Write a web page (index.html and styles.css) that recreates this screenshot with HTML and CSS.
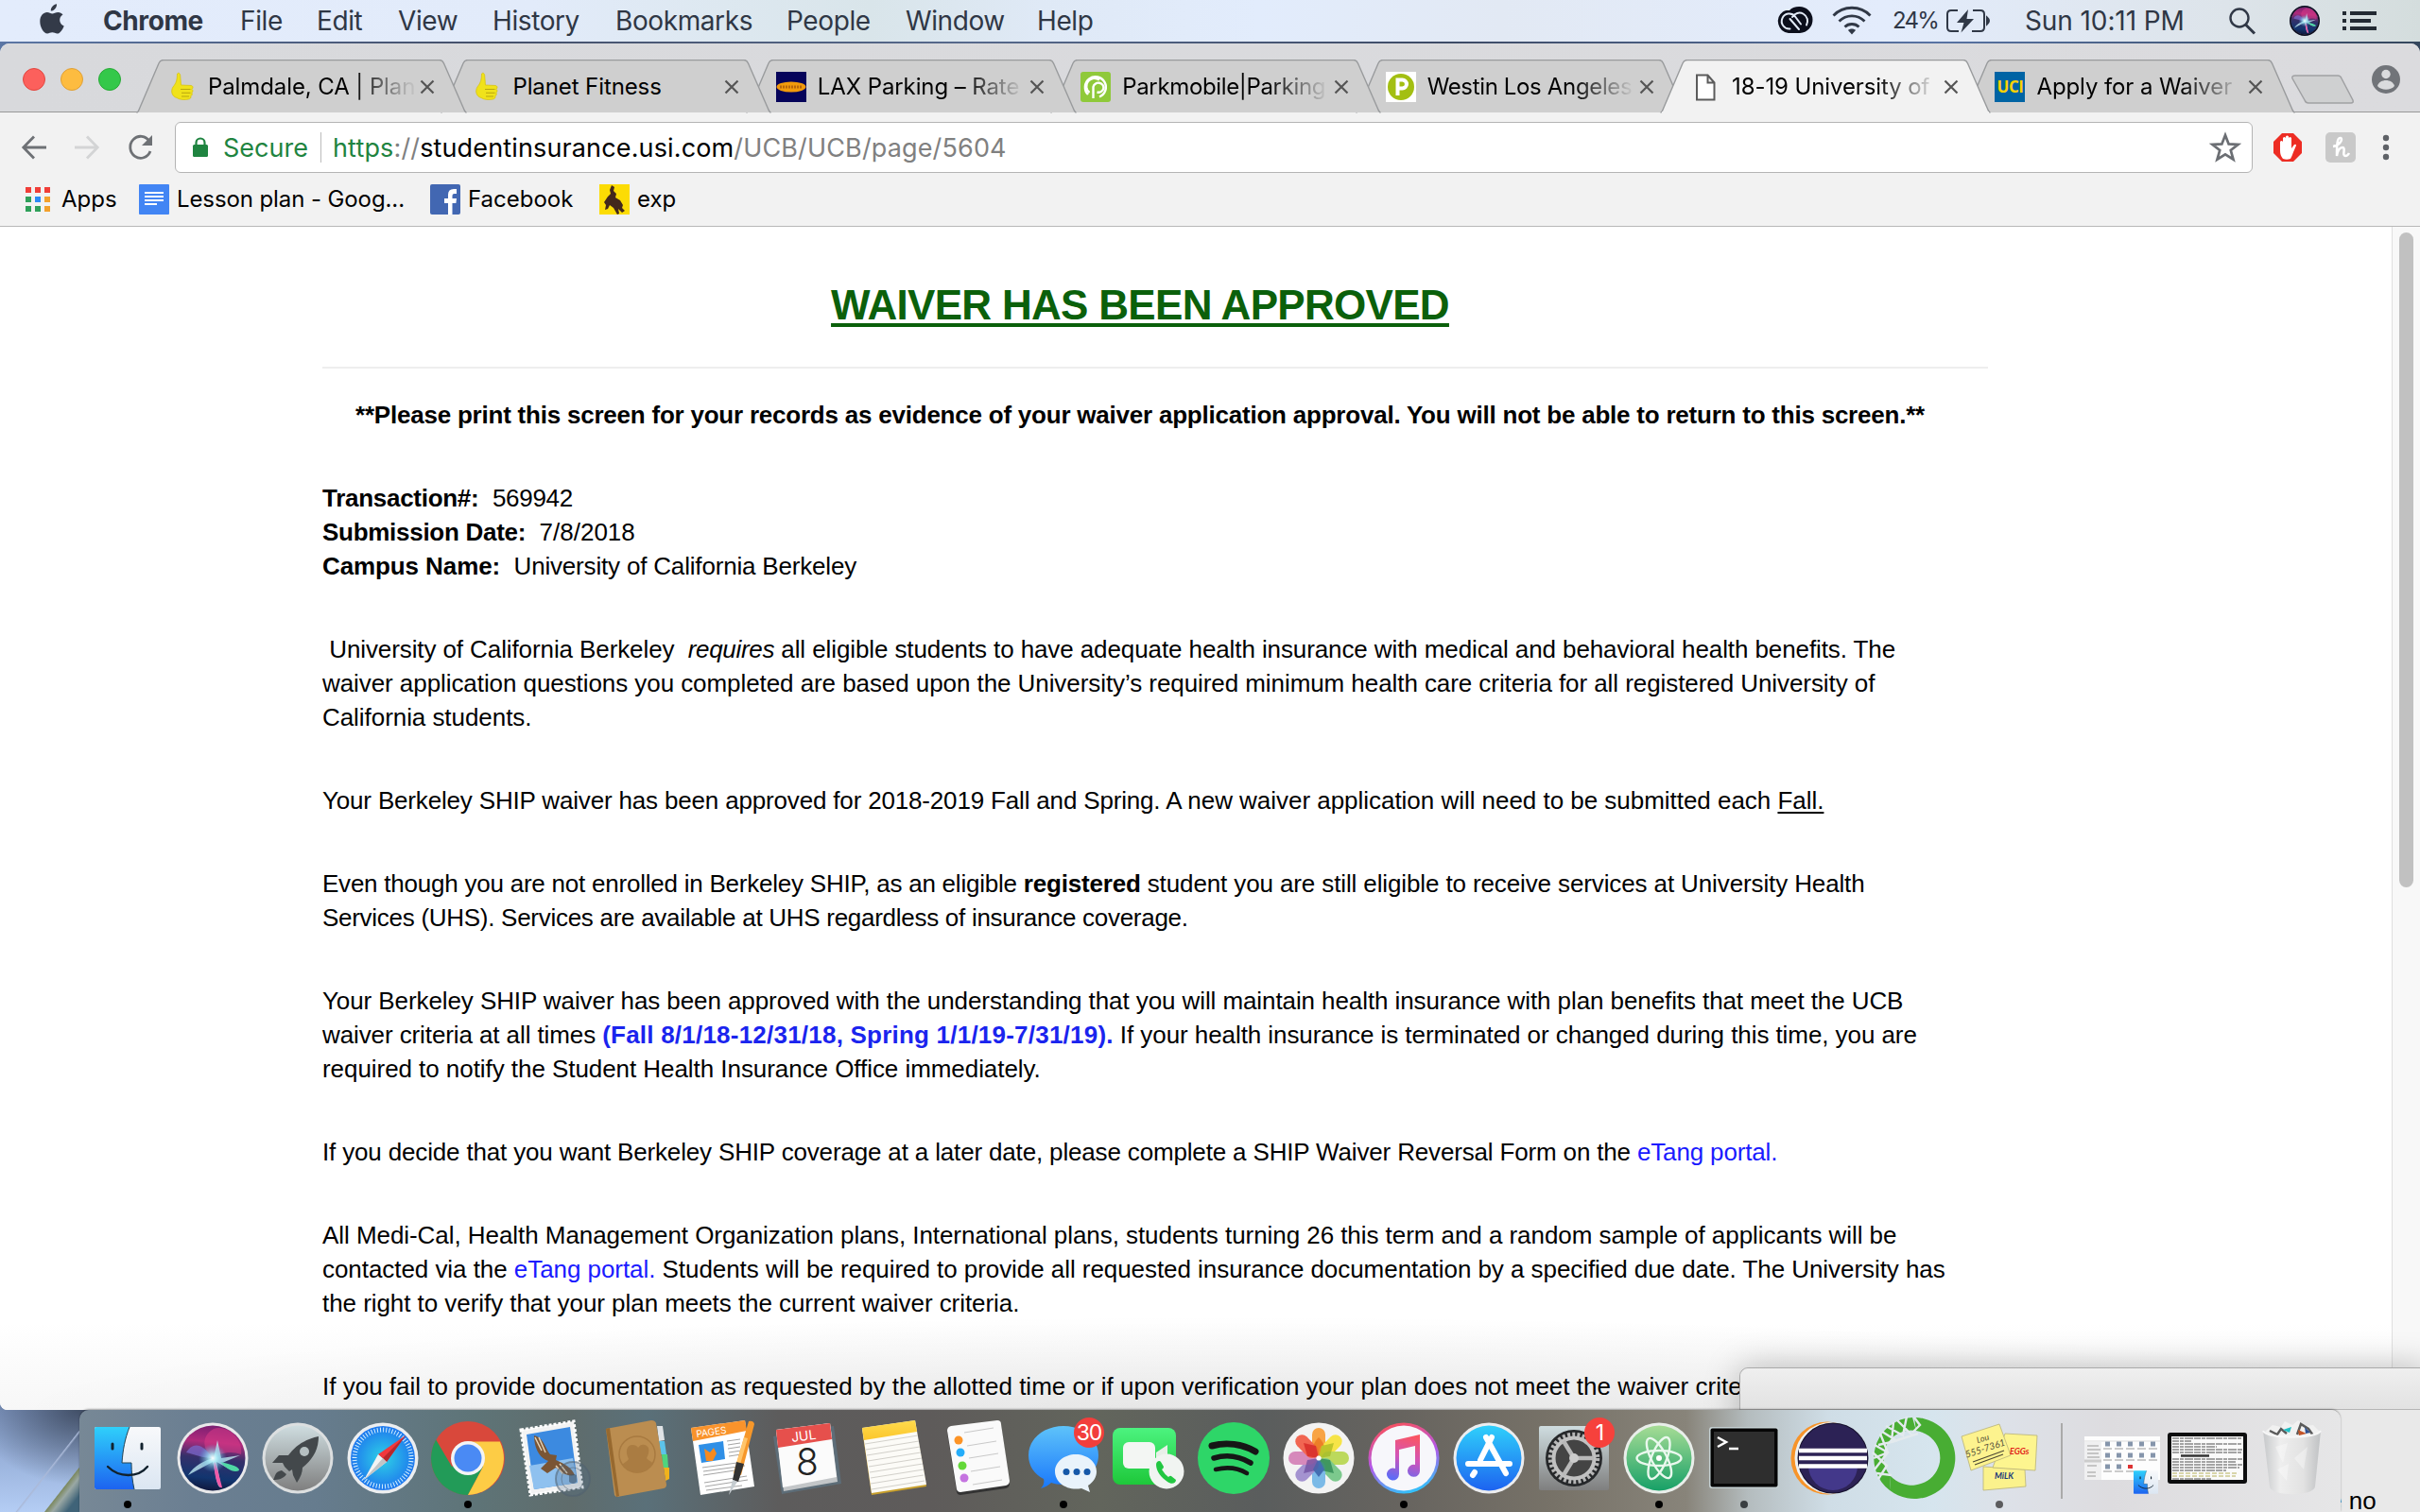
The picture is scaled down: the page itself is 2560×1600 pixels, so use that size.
FILE: index.html
```html
<!DOCTYPE html>
<html lang="en">
<head>
<meta charset="utf-8">
<title>18-19 University of California Berkeley</title>
<link rel="stylesheet" href="styles.css">
</head>
<body>
<svg class="defs" width="0" height="0">
  <defs>
    <linearGradient id="sky" x1="0" y1="0" x2="0" y2="1"><stop offset="0" stop-color="#2fd0fb"/><stop offset="1" stop-color="#1d63f0"/></linearGradient>
    <linearGradient id="face" x1="0" y1="0" x2="0" y2="1"><stop offset="0" stop-color="#f8f9fb"/><stop offset="1" stop-color="#dbe6f2"/></linearGradient>
    <linearGradient id="silver" x1="0" y1="0" x2="0" y2="1"><stop offset="0" stop-color="#cfdde0"/><stop offset="1" stop-color="#7f7f7f"/></linearGradient>
    <linearGradient id="green" x1="0" y1="0" x2="0" y2="1"><stop offset="0" stop-color="#4cf37f"/><stop offset="1" stop-color="#1ec83a"/></linearGradient>
    <linearGradient id="bubble" x1="0" y1="0" x2="0" y2="1"><stop offset="0" stop-color="#5ec3fa"/><stop offset="1" stop-color="#1a78fb"/></linearGradient>
    <linearGradient id="tune" x1="0.3" y1="0" x2="0.6" y2="1"><stop offset="0" stop-color="#fb5059"/><stop offset=".5" stop-color="#b457e8"/><stop offset="1" stop-color="#2fc4fa"/></linearGradient>
    <linearGradient id="note" x1="0.6" y1="0" x2="0.4" y2="1"><stop offset="0" stop-color="#fa5563"/><stop offset=".5" stop-color="#d254b8"/><stop offset="1" stop-color="#5e6bf5"/></linearGradient>
    <linearGradient id="atom" x1="0" y1="0" x2="0" y2="1"><stop offset="0" stop-color="#a6dc95"/><stop offset="1" stop-color="#17a067"/></linearGradient>
    <linearGradient id="amber" x1="0" y1="0" x2="0" y2="1"><stop offset="0" stop-color="#ffdb4d"/><stop offset="1" stop-color="#fbc62c"/></linearGradient>
    <linearGradient id="can" x1="0" y1="0" x2="1" y2="0"><stop offset="0" stop-color="#c6c8ca"/><stop offset=".3" stop-color="#eeeeee"/><stop offset=".7" stop-color="#e2e2e2"/><stop offset="1" stop-color="#bfc1c3"/></linearGradient>
    <radialGradient id="safari"><stop offset="0" stop-color="#2ed2e6"/><stop offset="1" stop-color="#1e78ee"/></radialGradient>
    <radialGradient id="core"><stop offset="0" stop-color="#fff"/><stop offset=".3" stop-color="#aef3fb" stop-opacity=".8"/><stop offset="1" stop-color="#5ad" stop-opacity="0"/></radialGradient>
    <linearGradient id="orb" x1="0.5" y1="0" x2="0.4" y2="1"><stop offset="0" stop-color="#7a1f72"/><stop offset=".25" stop-color="#b02a7c"/><stop offset=".5" stop-color="#35306a"/><stop offset=".8" stop-color="#12356f"/><stop offset="1" stop-color="#10173c"/></linearGradient>
    <symbol id="finder" viewBox="-35 -33 70 66">
      <rect x="-35" y="-33" width="70" height="66" rx="2" fill="url(#face)"/>
      <path d="M-33-33H2C-3-20-5-9-6 5H4C4 15 5 24 7 33H-33a2 2 0 0 1-2-2V-31a2 2 0 0 1 2-2z" fill="url(#sky)"/>
      <path d="M2-33C-3-20-5-9-6 5H4C4 15 5 24 7 33" fill="none" stroke="#245" stroke-width="1"/>
      <path d="M-16-15v5M15-15v5" stroke="#12222e" stroke-width="3" stroke-linecap="round"/>
      <path d="M-21 9C-9 21 11 21 21 9" fill="none" stroke="#12222e" stroke-width="2.4" stroke-linecap="round"/>
    </symbol>
    <symbol id="siri" viewBox="-38 -38 76 76">
      <circle r="37.5" fill="#e8e8ea"/><circle r="34.5" fill="url(#orb)"/>
      <path d="M0 0C-18-16-4-32 6-32C22-32 32-16 30-4C20-8 8-6 0 0z" fill="#d93a86" opacity=".55"/>
      <path d="M0 0C-12-18-22-16-28-6C-20-4-10 0 0 0z" fill="#7b6bd0" opacity=".7"/>
      <path d="M1 0L5-19 9 0 29-3 10 5 28 12C22 16 12 8 4 4L9 31C4 32 3 14 0 4L-26 18C-20 8-8 2 1 0z" fill="#c7f5fb" opacity=".75"/>
      <path d="M3 4L10 31C5 33 2 18 1 5z" fill="#f05aa8"/><path d="M8 4C16 6 28 8 28 13C22 16 14 11 8 4z" fill="#4fd8a4"/>
      <circle r="15" fill="url(#core)"/>
    </symbol>
    <symbol id="thumb" viewBox="0 0 32 32"><path d="M11.500 2c1.500-1.500 3-.5 3.200 2l.8 10 10.500.5c2.500.3 2.500 3 .8 3.800 1.600 1 1.500 2.900 0 3.700 1 1.500.4 3-1 3.600.6 1.800-.4 3.200-2.400 3.400-4 .8-9 .8-12.400-1.500C5.500 26 4.500 20 7 16c3.500-4 4.500-8 4.500-14z" fill="#f0e21a" stroke="#d8c412" stroke-width=".8"/><path d="M15 18.500h10.500M16 22.300h9.500M16 26h8" stroke="#b9a70f" stroke-width="1"/></symbol>
    <symbol id="cross" viewBox="0 0 16 16"><path d="M1.500 1.500L14.500 14.500M14.500 1.500L1.500 14.500" stroke="#555" stroke-width="2.200"/></symbol>
    <symbol id="tabshape" viewBox="0 0 350 57"><path d="M.5 56C2 56 2.500 54.500 3.500 52L24 4Q25.500.5 29 .5H321Q324 .5 325.500 4L346.500 52Q348 56 349.500 56" stroke="#999b9d" stroke-width="1.400"/></symbol>
    <g id="petal"><rect x="-7" y="-32" width="14" height="29" rx="7"/></g>
  </defs>
</svg>

<header class="menubar">
  <svg class="apple" viewBox="0 0 26 32"><path d="M18 .3c.3 3.800-2.800 7.300-6.200 7.300C11.400 4 14.800.6 18 .3zM24.500 11.400c-5 3-4 10 1.200 12-1.500 4-4.200 8.100-7.200 8.100-2 0-3-1.200-5.200-1.200-2.200 0-3.300 1.200-5.200 1.200C4 31.500.3 24.500.3 18.700.3 12.500 4 9 7.800 9c2.300 0 3.800 1.400 5.500 1.400C15 10.400 16.700 9 19.600 9c1.800 0 3.700.9 4.900 2.400z" fill="#333a48"/></svg>
  <nav class="menus"><b>Chrome</b><span>File</span><span>Edit</span><span>View</span><span>History</span><span>Bookmarks</span><span>People</span><span>Window</span><span>Help</span></nav>
  <div class="status">
    <svg class="cc" viewBox="0 0 38 28"><path d="M13 28A12.500 12.500 0 0 1 7 5.500 C10 3.500 12 4 14 4C16 1.500 20 0 24 0A14 14 0 0 1 25 28z" fill="#0c0f1c"/><path d="M14.500 23.500A8 8 0 1 1 20 10.500L26 18.500M32 19.500A8.500 8.500 0 1 0 17 11M24 24L14.500 13" fill="none" stroke="#e3ebf8" stroke-width="2" stroke-linecap="round"/></svg>
    <svg class="wifi" viewBox="0 0 42 30" fill="none" stroke="#303846" stroke-width="2.800"><path d="M1.500 9.500C12-1.500 30-1.500 40.500 9.500M7.500 15.500C15 8 27 8 34.500 15.500M13.500 21.500c4-4 11-4 15 0"/><path d="M21 29.500l-4-4.500c2-2 6-2 8 0z" fill="#303846" stroke="none"/></svg>
    <span class="percent">24%</span>
    <svg class="battery" viewBox="0 0 46 26" fill="none" stroke="#303846" stroke-width="2"><path d="M12 2H5Q1 2 1 6V20Q1 24 5 24H13M28 2h8Q40 2 40 6V20Q40 24 36 24H27"/><path d="M43 9.500q4 3.500 0 7z" fill="#303846"/><path d="M23 1L11 15h7.500L15.500 25.500 29 11H21.500z" fill="#303846" stroke="none"/></svg>
    <span class="clock">Sun 10:11 PM</span>
    <svg class="search" viewBox="0 0 28 28" fill="none" stroke="#303846" stroke-width="2.400"><circle cx="11" cy="11" r="9.500"/><path d="M17.500 18L27 27.500" stroke-width="3"/></svg>
    <svg class="siri-mini" viewBox="-38 -38 76 76"><use href="#siri" x="-38" y="-38" width="76" height="76"/><circle r="36" fill="none" stroke="#0b0c20" stroke-width="4"/></svg>
    <svg class="list" viewBox="0 0 36 20" fill="#232a33"><path d="M0 0h4v4H0zM8 0h28v4H8zM0 8h4v4H0zM8 8h22v4H8zM0 16h4v4H0zM8 16h28v4H8z"/></svg>
  </div>
</header>

<main class="window">
  <div class="tabstrip">
    <div class="lights"><i class="red"></i><i class="yellow"></i><i class="lime"></i></div>
    <div class="tabs">
      <div class="tab z7"><svg class="shape"><use href="#tabshape"/></svg><svg class="fav"><use href="#thumb"/></svg><span class="title fade">Palmdale, CA | Plan</span><svg class="x"><use href="#cross"/></svg></div>
      <div class="tab z6"><svg class="shape"><use href="#tabshape"/></svg><svg class="fav"><use href="#thumb"/></svg><span class="title">Planet Fitness</span><svg class="x"><use href="#cross"/></svg></div>
      <div class="tab z5"><svg class="shape"><use href="#tabshape"/></svg><svg class="fav" viewBox="0 0 32 32"><path d="M0 0h32v32H0z" fill="#06045a"/><ellipse cx="16" cy="16" rx="15.500" ry="5.500" fill="#f29a0c"/><path d="M4 16h24" stroke="#b8650a" stroke-width="3" stroke-dasharray="2 1"/></svg><span class="title fade">LAX Parking – Rate</span><svg class="x"><use href="#cross"/></svg></div>
      <div class="tab z4"><svg class="shape"><use href="#tabshape"/></svg><svg class="fav" viewBox="0 0 32 32"><rect width="32" height="32" rx="3" fill="#8fc93a"/><g fill="none" stroke="#fff" stroke-width="2.400"><path d="M8 24A11 11 0 1 1 20 26.500"/><path d="M13.500 28V16a5.500 5 0 1 1 4 5.500M9.500 22A8.500 8.500 0 0 1 20 8.500"/></g></svg><span class="title tight fade">Parkmobile|Parking</span><svg class="x"><use href="#cross"/></svg></div>
      <div class="tab z3"><svg class="shape"><use href="#tabshape"/></svg><svg class="fav" viewBox="0 0 32 32"><path d="M0 0h32v32H0z" fill="#fff"/><circle cx="16" cy="16" r="14" fill="#a3bf12"/><path d="M12.500 25V8.500h5a4.500 4.500 0 0 1 0 9h-5" fill="none" stroke="#fff" stroke-width="4"/></svg><span class="title tight fade">Westin Los Angeles</span><svg class="x"><use href="#cross"/></svg></div>
      <div class="tab active"><svg class="shape"><use href="#tabshape"/></svg><svg class="fav page-icon" viewBox="0 0 32 32"><path d="M7 3.500h11.500l7 8V29.500H7zM18.500 3.500v8h7" fill="#fff" stroke="#5b5b5b" stroke-width="2"/></svg><span class="title fade">18-19 University of</span><svg class="x"><use href="#cross"/></svg></div>
      <div class="tab z2"><svg class="shape"><use href="#tabshape"/></svg><span class="fav uci">UCI</span><span class="title fade">Apply for a Waiver</span><svg class="x"><use href="#cross"/></svg></div>
    </div>
    <svg class="newtab" viewBox="0 0 68 32"><path d="M5 1H50q3 0 4 3L66 27q1 3-2 3H19q-3 0-4-3L2 4Q1 1 5 1z" fill="#cfd0d1" stroke="#a0a1a3" stroke-width="1.500"/></svg>
    <svg class="user" viewBox="0 0 30 30"><circle cx="15" cy="15" r="15" fill="#717479"/><circle cx="15" cy="9.500" r="4.700" fill="#dadbdd"/><path d="M6 22c1-4 5-6 9-6s8 2 9 6c-4 5-14 5-18 0z" fill="#dadbdd"/></svg>
  </div>

  <div class="toolbar">
    <svg class="nav" viewBox="0 0 26 26" fill="none" stroke="#6e7175" stroke-width="2.800"><path d="M26 13H2.500M13 1.500L1.800 13 13 24.500"/></svg>
    <svg class="nav" viewBox="0 0 26 26" fill="none" stroke="#d3d4d5" stroke-width="2.800"><path d="M0 13H23.500M13 1.500L24.200 13 13 24.500"/></svg>
    <svg class="nav" viewBox="0 0 26 26"><path d="M23 6.500A11 11.500 0 1 0 24 17" fill="none" stroke="#6e7175" stroke-width="2.800"/><path d="M26 0v11H15z" fill="#6e7175"/></svg>
    <div class="omnibox">
      <svg class="lock" viewBox="0 0 16 22"><rect y="8" width="16" height="13" rx="1.500" fill="#1f8440"/><path d="M3.500 9V6a4.500 4.500 0 0 1 9 0V9" fill="none" stroke="#1f8440" stroke-width="2.200"/></svg>
      <span class="secure">Secure</span><i class="bar"></i>
      <span class="url"><em>https</em>://<strong>studentinsurance.usi.com</strong>/UCB/UCB/page/5604</span>
      <svg class="star" viewBox="0 0 30 30"><path d="M15 3.500L18.200 11.800 27 12.200 20.100 17.700 22.500 26.200 15 21.400 7.500 26.200 9.900 17.700 3 12.200 11.800 11.800z" fill="none" stroke="#6b6e73" stroke-width="2.400"/></svg>
    </div>
    <svg class="adblock" viewBox="0 0 30 30"><path d="M9 0H21L30 9V21L21 30H9L0 21V9z" fill="#ed2d24"/><path d="M10 27c-3-4-3-6-3-12V9q1.500-2 3 0v-4q1.500-2 3 0V3.500q1.500-2 3 0V5q1.500-2 3 0v11l3-4q2-1 2 1l-3 7c-1 3-2 5-3 7-3 1-5 1-8 0z" fill="#fff"/></svg>
    <svg class="honey" viewBox="0 0 32 32"><rect width="32" height="32" rx="5" fill="#c9c9c9"/><path d="M8 15c7-1 11-8 8-9-4-1-4 9-4 19 1-6 3-9 6-9 4 0-1 9 3 9 2 0 3-1 4-3" fill="none" stroke="#fff" stroke-width="2.500"/></svg>
    <svg class="dots" viewBox="0 0 8 28" fill="#5f6267"><circle cx="4" cy="4" r="3.200"/><circle cx="4" cy="14" r="3.200"/><circle cx="4" cy="24" r="3.200"/></svg>
  </div>

  <div class="bookmarks">
    <svg class="apps" viewBox="0 0 26 26"><path d="M0 0h6v6H0zM10 0h6v6h-6zM20 0h6v6h-6z" fill="#f03e38"/><path d="M0 10h6v6H0zM0 20h6v6H0zM10 20h6v6h-6z" fill="#2fa05a"/><path d="M10 10h6v6h-6z" fill="#2b8af5"/><path d="M20 10h6v6h-6zM20 20h6v6h-6z" fill="#f3a12c"/></svg><span class="b1">Apps</span>
    <svg viewBox="0 0 32 32"><rect width="32" height="32" rx="1" fill="#4285f4"/><path d="M6 9h20M6 13h20M6 17h20M6 21h13" stroke="#fff" stroke-width="1.800"/></svg><span class="b2">Lesson plan - Goog...</span>
    <svg viewBox="0 0 32 32"><rect width="32" height="32" rx="2" fill="#4267b2"/><path d="M19 32V20h-4v-5h4v-4q0-6 6-6h3v5h-2.500Q23.500 10 23.500 12v3H28l-.6 5h-3.900V32z" fill="#fff"/></svg><span class="b3">Facebook</span>
    <svg viewBox="0 0 32 32"><path d="M0 0h32v32H0z" fill="#fcdc04"/><path d="M13 1l3 2-1 4 3 3-1 4 5 3 3 5-1 3 3 3-3 2-4-4 1 5-2 1-4-7-4-3-2 4-3 1 1-5-2-3 4-6 3-3-1-4z" fill="#43281c"/></svg><span>exp</span>
  </div>

  <div class="viewport">
    <article>
      <h1>WAIVER HAS BEEN APPROVED</h1>
      <hr>
      <p class="print">**Please print this screen for your records as evidence of your waiver application approval. You will not be able to return to this screen.**</p>
      <p><b class="k3">Transaction#:</b>&nbsp; <span class="k3">569942</span><br><b class="k3">Submission Date:</b>&nbsp; 7/8/2018<br><b class="k1">Campus Name:</b>&nbsp; <span class="k2">University of California Berkeley</span></p>
      <p>&nbsp;<span class="k1">University of California Berkeley&nbsp; </span><i class="req">requires</i><span class="k1"> all eligible students to have adequate health insurance with medical and behavioral health benefits. The</span><br><span class="k07">waiver application questions you completed are based upon the University’s required minimum health care criteria for all registered University of</span><br><span class="k05">California students.</span></p>
      <p><span class="k17">Your Berkeley SHIP waiver has been approved for 2018-2019 Fall and Spring.</span><span class="k03"> A new waiver application will need to be submitted each <u>Fall.</u></span></p>
      <p><span class="k23">Even though you are not enrolled in Berkeley SHIP, as an eligible </span><b class="k2">registered</b><span class="k12"> student you are still eligible to receive services at University Health</span><br><span class="k3">Services (UHS). Services are available at UHS regardless of insurance coverage.</span></p>
      <p><span class="k09">Your Berkeley SHIP waiver has been approved with the understanding that you will maintain health insurance with plan benefits that meet the UCB</span><br><span class="k1">waiver criteria at all times </span><b class="dates">(Fall 8/1/18-12/31/18, Spring 1/1/19-7/31/19).</b><span class="k07"> If your health insurance is terminated or changed during this time, you are</span><br><span class="k05">required to notify the Student Health Insurance Office immediately.</span></p>
      <p class="k16">If you decide that you want Berkeley SHIP coverage at a later date, please complete a SHIP Waiver Reversal Form on the <a>eTang portal.</a></p>
      <p class="k05">All Medi-Cal, Health Management Organization plans, International plans, students turning 26 this term and a random sample of applicants will be<br>contacted via the <a>eTang portal.</a> Students will be required to provide all requested insurance documentation by a specified due date. The University has<br>the right to verify that your plan meets the current waiver criteria.</p>
      <p>If you fail to provide documentation as requested by the allotted time or if upon verification your plan does not meet the waiver crite</p>
    </article>
    <div class="scroll"><i></i></div>
  </div>
</main>

<section class="backwindow"><div class="strip"></div><div class="rest">e no</div></section>

<footer class="dock">
  <svg class="run"><use href="#finder" x="-35" y="-33" width="70" height="66"/><circle cy="49" r="4"/></svg>
  <svg><use href="#siri" x="-38" y="-38" width="76" height="76"/></svg>
  <svg><circle r="37.500" fill="#dcdfe0"/><circle r="34.500" fill="url(#silver)"/><path d="M22-23C8-20-3-13-10-3L-20-3-27 5-16 5-14 9-9 14-6 12-5 18-1 26C3 20 5 15 5 10 15 2 22-8 22-23z" fill="#43484b"/><path d="M-17 13C-25 14-24 21-26 23-21 23-15 22-12 17z" fill="#43484b"/><circle cx="7" cy="-7" r="5" fill="#b5bfc1"/></svg>
  <svg><circle r="37.500" fill="#eceef0"/><circle r="34" fill="url(#safari)"/><circle r="30" fill="none" stroke="#d5efff" stroke-width="5" stroke-dasharray="1 2.140"/><path d="M24-24L-5-4 4 4z" fill="#f1373c"/><path d="M-20 23L-5-4 4 4z" fill="#f3f3f3"/><path d="M24-24L4 4 0 0z" fill="#b8272c"/><path d="M-20 23L4 4 0 0z" fill="#c1c4c6"/></svg>
  <svg class="run"><circle r="39" fill="#d9483b"/><path d="M-33.800-19.500A39 39 0 0 0 0 39L16 9 0 0-17 9z" fill="#229b58"/><path d="M0 39A39 39 0 0 0 33.800-17.500H0L16 9z" fill="#fdcc45"/><circle r="18" fill="#f4f4f4"/><circle r="14.500" fill="#4a8af4"/><circle cy="49" r="4"/></svg>
  <svg><path d="M-34-30L22-39 31 31-24 39z" fill="#f3f3f3" stroke="#fff" stroke-width="3" stroke-dasharray="3 2"/><path d="M-28-25L18-33 26 26-20 33z" fill="#3c8ae0"/><path d="M-25 8L21 0 26 26-20 33z" fill="#8fc1ef"/><path d="M-20-24C-10-22-8-10-3-4L4-3 3 2C12 6 20 10 23 18 14 20 8 14 3 10L-6 16-13 11-5 3C-14 0-20-10-20-24z" fill="#7a5534"/><path d="M-19-22L-12-8M-15-22L-8-6M7 6l8 10M3 8l8 9" stroke="#e2d0b4" stroke-width="1.500"/><circle cx="21" cy="22" r="18" fill="#4f6b86" fill-opacity=".25" stroke="#50606f" stroke-opacity=".55" stroke-width="2"/><circle cx="21" cy="22" r="12" fill="none" stroke="#50606f" stroke-opacity=".5"/><path d="M17 18q4-2 8 0v7q-4 4-8 0z" fill="#3f566d" opacity=".6"/></svg>
  <svg><path d="M20-34l6 0 2 15-6 1z" fill="#dfe3e6"/><path d="M22-18h6l2 14h-6z" fill="#5cc3ea"/><path d="M25-4h6l1 14h-6z" fill="#4fd47e"/><path d="M27 10h6l0 12-4 2z" fill="#f0b21c"/><path d="M-34-31L14-40q4 0 5 3L30 28q0 3-3 4L-22 41q-2 0-3-2z" fill="#bb8d50"/><path d="M-34-31l4-1L-20 40l-3 1z" fill="#97692f"/><circle cx="-1" cy="-4" r="19" fill="none" stroke="#a87a40" stroke-width="1.500"/><path d="M-17 7C-14 4-12 4-10 1-14-7-12-14-6-14-3-14-1-13 0-11 2-14 4-15 7-14 13-13 12-5 9 0 11 3 14 3 16 6 8 18-9 18-17 7z" fill="#aa7c42"/></svg>
  <svg><path d="M-34-32L23-40 33 30-24 39z" fill="#fff"/><path d="M-34-32L23-40 25-29-32-18z" fill="#f9932b"/><text x="-28" y="-22" class="pg" transform="rotate(-8 -28 -22)">PAGES</text><path d="M-26-14L0-18 2 1-23 5z" fill="#2f8fe6"/><path d="M-20-10l6 4 4-5 3 6-4 8-7 0z" fill="#f58a1f"/><g stroke="#a4a4a4" stroke-width="1"><path d="M4-18l14-2M5-14l13-2M5-10l13-2M6-6l13-2M6-2l13-2M-22 10l44-6M-21 14l44-6M-21 18l40-6M-20 26l45-7M-19 30l45-7M-18 34l38-5"/></g><path d="M27-39q5-1 6 3L19 18l-8-2z" fill="#f6972a"/><path d="M22-22l4 1-11 38-4-1z" fill="#ffc56b"/><path d="M14 4l8 2-6 19-6-2z" fill="#333"/><path d="M10 23l5 2-9 14z" fill="#c5ccd0"/></svg>
  <svg><path d="M-37-23L-28 38 35 27 27-34z" fill="#5d6d78"/><path d="M-34-30L23-37 31 25-26 35z" fill="#c3c6c8"/><path d="M-34-30L23-37 30 20-27 31z" fill="#fbfbfb"/><path d="M-34-30L23-37 25-20-32-11z" fill="#e6504c"/><text class="jul" x="-2" y="-19" transform="rotate(-7)">JUL</text><text class="day" x="-1" y="18">8</text></svg>
  <svg><path d="M-33-30L23-38 35 30-23 39z" fill="#c8a02c"/><path d="M-33-32L23-40 35 28-23 37z" fill="#fcfbf7"/><path d="M-33-32L23-40 25-28-31-19z" fill="url(#amber)"/><g stroke="#d2d0ca" stroke-width="1"><path d="M-30-15l56-9M-29-9l56-9M-28-3l56-9M-27 3l56-9M-26 9l56-9M-25 15l56-9M-24 21l56-9M-24 27l56-9M-23 33l56-9"/></g></svg>
  <svg><path d="M-29-32L20-39q4 0 4 4L33 27q0 4-4 5L-19 39q-3 0-4-3L-33-27q0-4 4-5z" fill="#333"/><path d="M-29-34L20-40q4 0 4 4L33 24q0 4-4 5L-19 36q-3 0-4-3L-33-29q0-4 4-5z" fill="#fafafa"/><g stroke="#c9c9c9"><path d="M-15-27l31-5M-12-13l31-5M-10 0l31-5M-8 14l31-5M-6 28l31-5"/></g><circle cx="-21" cy="-19" r="4.500" fill="#fd9426"/><circle cx="-19" cy="-6" r="4.500" fill="#24adfa"/><circle cx="-17" cy="8" r="4.500" fill="#63d838"/><circle cx="-15" cy="21" r="4.500" fill="#c574e0"/></svg>
  <svg class="run"><path d="M0-34C20-34 37-21 37-3S20 28 0 28C-5 28-10 27-13 26-16 29-20 31-24 32-21 29-20 25-21 22-31 17-37 8-37-3-37-21-20-34 0-34z" fill="url(#bubble)"/><path d="M13-4C25-4 35 4 35 14 35 20 32 25 26 29L28 36 19 32C4 35-9 26-9 14-9 4 1-4 13-4z" fill="#e9f3fb"/><g fill="#1558a8"><circle cx="3" cy="14.500" r="3.500"/><circle cx="14" cy="14.500" r="3.500"/><circle cx="25" cy="14.500" r="3.500"/></g><circle cx="27" cy="-27" r="16" fill="#f23e3c"/><text class="badge" x="27" y="-19">30</text><circle cy="49" r="4"/></svg>
  <svg><rect x="-38" y="-32" width="67" height="60" rx="8" fill="url(#green)"/><rect x="-27" y="-17" width="34" height="28" rx="6" fill="#f3f6f3"/><path d="M8-6L20-14V10L8 2z" fill="#e8efe8"/><circle cx="19" cy="14" r="18.500" fill="#f1f4f1"/><path d="M8 7c0-4 4-5 5-3l3 5q0 2-2 3 3 5 7 8 2-2 3-1l5 4c0 4-5 5-9 2C14 21 8 14 8 7z" fill="#22c741"/></svg>
  <svg><circle r="38" fill="#2ed668"/><g fill="none" stroke="#161616" stroke-linecap="round"><path d="M-23-13C-8-17 9-15 23-7" stroke-width="7"/><path d="M-21 0C-8-4 6-2 18 5" stroke-width="5.500"/><path d="M-19 12C-7 9 4 10 14 16" stroke-width="4.500"/></g></svg>
  <svg><circle r="37.500" fill="#f3f3f3"/><g opacity=".88"><use href="#petal" fill="#f99a2e"/><use href="#petal" fill="#f7e230" transform="rotate(45)"/><use href="#petal" fill="#b5d648" transform="rotate(90)"/><use href="#petal" fill="#6cc47f" transform="rotate(135)"/><use href="#petal" fill="#6bb3e6" transform="rotate(180)"/><use href="#petal" fill="#9a86cc" transform="rotate(225)"/><use href="#petal" fill="#d37bb4" transform="rotate(270)"/><use href="#petal" fill="#f1533c" transform="rotate(315)"/></g><g opacity=".7"><path d="M0 0L-7-9Q-5-18 0-22 5-18 7-9z" fill="#e8701d"/><path d="M0 0L-12-2-16-16-3-13z" fill="#d31f20"/><path d="M0 0L12-2 16-16 3-13z" fill="#a5b820"/><path d="M0 0L-12 2-16 16-3 13z" fill="#6a4a9c"/><path d="M0 0L12 2 16 16 3 13z" fill="#27824e"/><path d="M0 0L-6 12 0 20 6 12z" fill="#2c4f9c"/></g><circle r="2.500" fill="#fff"/></svg>
  <svg class="run"><circle r="37.500" fill="url(#tune)"/><circle r="34.500" fill="#f7f7fb"/><path d="M-9-19L17-25V13A6.500 6.500 0 1 1 12 7V-13L-5-9V17A6.500 6.500 0 1 1-9 11z" fill="url(#note)"/><circle cy="49" r="4"/></svg>
  <svg><circle r="37.500" fill="#ecedef"/><circle r="34.500" fill="url(#sky)"/><g stroke="#fff" stroke-width="6" stroke-linecap="round"><path d="M-22 6H22M3-22L-9 2M-3-22L18 16M-15 15l-2 3"/></g></svg>
  <svg><rect x="-37" y="-34" width="74" height="68" rx="2" fill="url(#silver)"/><circle r="30" fill="#26282a"/><circle r="25" fill="none" stroke="#b5b5b5" stroke-width="4.500" stroke-dasharray="3 2.240"/><circle r="21.500" fill="#444" stroke="#c1c1c1" stroke-width="4"/><path d="M0 0L-11-18M0 0H21M0 0L-11 18" stroke="#b9b9b9" stroke-width="4.500"/><circle r="5" fill="#ccc"/><circle cx="27" cy="-27" r="16" fill="#f6413c"/><text class="badge" x="27" y="-19">1</text></svg>
  <svg class="run"><circle r="37.500" fill="#e9eeea"/><circle r="34.500" fill="url(#atom)"/><g fill="none" stroke="#eaf8ee" stroke-width="2.400"><ellipse rx="23.500" ry="8"/><ellipse rx="23.500" ry="8" transform="rotate(62)"/><ellipse rx="23.500" ry="8" transform="rotate(112)"/></g><circle r="3" fill="#fff"/><circle cy="49" r="4"/></svg>
  <svg class="run dim"><rect x="-37" y="-33" width="74" height="65" rx="3" fill="#c5d0d2"/><rect x="-35.500" y="-31.500" width="71" height="62" rx="2" fill="#060606"/><rect x="-32" y="-28" width="64" height="55" fill="#2e2e2e"/><path d="M-28-22l9 5-9 5M-16-10h10" fill="none" stroke="#fff" stroke-width="2.500"/><circle cy="49" r="4"/></svg>
  <svg><circle cx="-2" r="38.500" fill="#f7942a"/><circle cx="1.500" r="38" fill="#eef1f4"/><circle cx="4" r="37.500" fill="#15102b"/><circle cx="4" r="36.500" fill="#2c2255"/><path d="M-22 8a26 26 0 0 0 52 0z" fill="#43388a"/><path d="M-32-8H40M-32 0H40M-32 8.500H40" stroke="#fff" stroke-width="4.500"/></svg>
  <svg><path d="M0-43A43 43 0 1 1-26 34L-25 19A30 29 0 1 0 2-29z" fill="#48ad33"/><path d="M-2-43A43 43 0 0 0-26 34L-25 19A29 29 0 0 1 2-29z" fill="#48ad33"/><path d="M-38-14L-24-17-22-38M-43 0L-28-6-36-26M-24-17L4-26M-18-40L-2-24M-34-28L-18-18M-30-34L-12-24 -8-44M-42 12L-28-6-42-14M-38 22L-29 8-44-6M-40 16L-24 18" fill="none" stroke="#e3eaee" stroke-width="2.400"/><path d="M0-43L6-35-2-27" fill="none" stroke="#e3eaee" stroke-width="2.400"/></svg>
  <svg class="run grey"><path d="M-17 9L27 12 28 30-17 34z" fill="#fbf28c" stroke="#b9b277" stroke-width=".8"/><path d="M6-26L40-24 38 13-7 10z" fill="#fdf58f" stroke="#b9b277" stroke-width=".8"/><path d="M-40-23L0-36 12-3-30 13z" fill="#fdf38e" stroke="#b9b277" stroke-width=".8"/><text class="hand" transform="rotate(-18)" x="-17" y="-22">Lou</text><text class="hand big" transform="rotate(-18)" x="-33" y="-11">555-7361</text><path d="M-28 4L5-8M-26 7L4-4" stroke="#4d4a35" stroke-width="1.200"/><text class="hand eggs" x="11" y="-4">EGGs</text><text class="hand milk" x="-5" y="22">MiLK</text><circle cy="49" r="4"/></svg>
  <i class="sep"></i>
  <svg><rect x="-40" y="-23" width="80" height="46" fill="#fdfdfd"/><path d="M-40-17h18v40h-18z" fill="#f0f0f1"/><path d="M-40-18H40" stroke="#ddd"/><path d="M-37-13h12M-37-9h14M-37-5h12M-37-1h13M-37 8h10M-37 15h9M-37 19h9" stroke="#9a9a9a" stroke-width="1.200"/><path d="M-40 3h18" stroke="#ccc" stroke-width="3"/><g stroke="#8595ab" stroke-width="5" stroke-dasharray="5 7"><path d="M-18-15H38M-18-3H38M-18 9h20"/></g><path d="M6 7h5v4H6z" fill="#d33"/><path d="M-20-10H38M-20 2H38M-20 14h32" stroke="#999" stroke-width="1.200" stroke-dasharray="9 3"/><use href="#finder" x="12" y="13" width="26" height="25"/></svg>
  <svg><rect x="-42" y="-27" width="84" height="54" rx="3" fill="#0c0d0e"/><rect x="-38" y="-23" width="76" height="46" fill="#fafafa"/><g stroke="#888" stroke-width="1.300" stroke-dasharray="7 1 4 1 9 1"><path d="M-37-21H36M-37-18h20M-37-15H36M-37-12H10M-37-9H37M-37-6H36M-37 1H37M-37 4H30M-37 7H37M-37 10H34M-37 13H20M-37 22H4"/></g><path d="M-28-2.500H2" stroke="#333" stroke-width="2.500"/><path d="M-37 16H32M-37 19H30" stroke="#b5b05a" stroke-width="1.200" stroke-dasharray="5 2"/></svg>
  <svg><path d="M-29-28L-21-35-12-33-8-39 0-35 6-40 14-34 22-35 29-28 20-22H-22z" fill="#f1f1f1"/><path d="M-24-29l8 4 4-6 6 5M5-25l4-11 8 5 5 7" fill="none" stroke="#5a5a5a" stroke-width="2.500"/><path d="M-10-30l9-3-2 6z" fill="#21bfc4"/><path d="M6-30l9 4-8 2z" fill="#c35428"/><path d="M13-33l6 6-5 1z" fill="#2d4f90"/><path d="M-31-29C-28-20 26-20 30-29L24 30C23 41-23 41-24 30z" fill="url(#can)"/><path d="M-31-29C-28-20 26-20 30-29" fill="none" stroke="#f7f7f7" stroke-width="2"/><path d="M-18-12L-5-16-10 5zM2 0l14-12-4 24zM-16 12l12-6-2 18z" fill="#fff" opacity=".35"/></svg>
</footer>
</body>
</html>
```
FILE: styles.css
```css
* { box-sizing: border-box; }
body {
  margin: 0; width: 2560px; height: 1600px; overflow: hidden; position: relative;
  display: flex; flex-direction: column; gap: 2px;
  font-family: Inter, "Liberation Sans", sans-serif; color: #000;
  background:
    linear-gradient(128deg, transparent 79px, #aab9d8 80px, transparent 82px) 0 1492px / 84px 108px no-repeat,
    linear-gradient(128deg, transparent 103px, #7d8a62 104px, #9aa8a4 110px, #3f6378 122px) 0 1492px / 84px 108px no-repeat,
    radial-gradient(110px 80px at 84px 1492px, rgba(45,55,72,.75), transparent),
    linear-gradient(180deg, #7c94c0, #b4cdf4) 0 1480px / 100px 120px no-repeat,
    linear-gradient(90deg, #5b76a4, #44506a 20%, #56698c 40%, #3d4b66 60%, #5873a3 80%, #34465c);
}
svg { display: block; overflow: visible; flex: none; }
.defs { position: absolute; }
i { font-style: normal; }

.menubar {
  height: 44px; flex: none; display: flex; align-items: center; color: #2f3745;
  font-size: 28px; letter-spacing: -.4px; line-height: 44px; white-space: nowrap;
  background: linear-gradient(90deg, #e3ecfc, #e2ebfa 22%, #dde8f0 30%, #d9e5ea 36%, #dfe9f6 43%, #e2ecfc 52%, #e2e9f4 62%, #e3ecfc 78%, #dde4ea 92%, #d4dddd);
}
.apple { width: 26px; height: 32px; margin: -4px 41px 0 42px; }
.menus { display: grid; grid-template-columns: 145px 81px 86px 100px 130px 181px 126px 139px 70px; }
.status { margin-left: auto; margin-right: 46px; display: flex; align-items: center; }
.cc { width: 38px; height: 28px; margin: -2px 21px 0 0; }
.wifi { width: 42px; height: 30px; margin-right: 22px; }
.percent { font-size: 24px; letter-spacing: -1.7px; width: 57px; }
.battery { width: 46px; height: 26px; margin-right: 37px; }
.clock { width: 216px; letter-spacing: -.1px; }
.search { width: 28px; height: 28px; margin-right: 36px; }
.siri-mini { width: 32px; height: 32px; margin-right: 24px; }
.list { width: 36px; height: 20px; }

.window { height: 1446px; flex: none; border-radius: 10px 10px 8px 8px; overflow: hidden; background: #fff; display: flex; flex-direction: column; }
.tabstrip { height: 73px; flex: none; display: flex; background: linear-gradient(90deg, #d8d9dc, #dbdbde); border-bottom: 1px solid #999; }
.lights { display: flex; gap: 16px; padding: 26px 0 0 24px; width: 144px; flex: none; }
.lights i { width: 24px; height: 24px; border-radius: 50%; border: 1px solid #e2463f; background: #fc605c; }
.lights .yellow { background: #fdbc40; border-color: #dfa036; }
.lights .lime { background: #34c84a; border-color: #27aa35; }
.tabs { display: flex; padding-top: 17px; width: 2284px; flex: none; }
.tab { width: 350px; height: 56px; flex: none; margin-right: -27.6px; padding: 1px 33px 0 32px; display: flex; align-items: center; position: relative; color: #000; }
.z7 { z-index: 7; } .z6 { z-index: 6; } .z5 { z-index: 5; } .z4 { z-index: 4; } .z3 { z-index: 3; } .z2 { z-index: 2; }
.shape { position: absolute; left: 0; top: 0; width: 350px; height: 57px; fill: #cfcfcf; z-index: -1; }
.active { z-index: 9; }
.active .shape { fill: #f2f2f2; }
.active::after { content: ""; position: absolute; left: 2px; right: 2px; bottom: -1px; height: 2px; background: #f2f2f2; z-index: -1; }
.fav { width: 32px; height: 32px; flex: none; }
.uci { background: #0064a4; color: #ffd200; font: bold 17px/32px "Open Sans", sans-serif; letter-spacing: -.5px; text-align: center; }
.title { margin-left: 12px; width: 218px; font-size: 24px; letter-spacing: -.1px; line-height: 32px; white-space: nowrap; flex: none; }
.tight { letter-spacing: -.35px; }
.fade { color: transparent; background: linear-gradient(90deg, #000 70%, rgba(0,0,0,.08) 98%); -webkit-background-clip: text; background-clip: text; }
.x { width: 16px; height: 16px; margin-left: 6px; }
.newtab { width: 68px; height: 32px; margin: 33px 0 0 -5px; }
.user { width: 30px; height: 30px; margin: 23px 0 0 18px; }

.toolbar { height: 70px; flex: none; background: #f2f2f2; display: flex; align-items: center; padding: 4px 0 0 23px; }
.nav { width: 26px; height: 26px; margin-right: 30px; }
.omnibox { width: 2198px; height: 54px; margin-left: -6px; flex: none; border: 1.500px solid #b4b4b4; border-radius: 6px; background: #fff; display: flex; align-items: center; font-size: 27px; white-space: nowrap; padding-left: 18px; }
.lock { width: 16px; height: 22px; }
.secure { color: #1f8440; margin-left: 16px; width: 103px; }
.bar { width: 1px; height: 32px; background: #bbb; }
.url { margin-left: 12px; color: #808080; letter-spacing: .14px; }
.url em { font-style: normal; color: #1f8440; }
.url strong { font-weight: 400; color: #000; }
.star { width: 34px; height: 34px; margin: 0 11px 0 auto; }
.adblock { width: 30px; height: 30px; margin-left: 22px; }
.honey { width: 32px; height: 32px; margin-left: 25px; }
.dots { width: 8px; height: 28px; margin-left: 28px; }

.bookmarks { height: 51px; flex: none; background: #f2f2f2; border-bottom: 1px solid #b8b8b8; display: flex; align-items: center; padding: 0 0 7px 27px; font-size: 24px; white-space: nowrap; }
.bookmarks svg { width: 32px; height: 32px; margin-right: 8px; }
.bookmarks .apps { width: 26px; height: 26px; margin-right: 12px; }
.b1 { width: 82px; } .b2 { width: 268px; letter-spacing: -.1px; } .b3 { width: 139px; }

.viewport { flex: 1; display: flex; overflow: hidden; background: radial-gradient(1300px 100px at 1300px 100%, rgba(0,0,0,.07), transparent), linear-gradient(180deg, #fff 1160px, #f7f7f7 1252px); }
article { width: 2530px; flex: none; padding-left: 341px; font: 26px/36px "Liberation Sans", Arial, sans-serif; white-space: nowrap; }
h1 { margin: 57px 0 0; width: 1730px; font-size: 44px; letter-spacing: -.7px; line-height: 52px; text-align: center; color: #0b600b; text-decoration: underline; text-decoration-thickness: 4px; text-underline-offset: 4px; }
hr { margin: 39px 0 0; width: 1762px; height: 2px; border: 0; background: #eee; }
p { margin: 0 0 52px; }
.print { width: 1730px; margin-top: 31px; text-align: center; font-weight: bold; letter-spacing: -.22px; }
.k03 { letter-spacing: -.03px; } .k05 { letter-spacing: -.057px; } .k07 { letter-spacing: -.072px; } .k09 { letter-spacing: -.09px; }
.k1 { letter-spacing: -.1px; } .k12 { letter-spacing: -.12px; } .k16 { letter-spacing: -.16px; } .k17 { letter-spacing: -.17px; }
.k2 { letter-spacing: -.18px; } .k23 { letter-spacing: -.23px; } .k3 { letter-spacing: -.28px; }
.req { font-style: italic; letter-spacing: -.3px; }
.dates { color: #1a24ee; letter-spacing: .22px; }
article a { color: #1a1aff; }
article u { text-decoration-thickness: 2px; text-underline-offset: 3px; }
.scroll { flex: 1; border-left: 1px solid #e0e0e0; background: rgba(245,245,245,.7); padding: 6px 0 0 7px; }
.scroll i { display: block; width: 15px; height: 693px; border-radius: 8px; background: #c1c1c1; }

.backwindow { position: absolute; left: 1840px; top: 1447px; width: 730px; height: 160px; border: 1px solid #aaa; border-radius: 9px 0 0 0; background: #e9e9e9; box-shadow: 0 0 36px rgba(0,0,0,.25); }
.strip { height: 44px; background: linear-gradient(180deg, #efefef, #e2e2e2); border-bottom: 1px solid #b5b5b5; border-radius: 9px 0 0 0; }
.rest { font: 26px/36px "Liberation Sans", sans-serif; padding: 78px 0 0 622px; }

.dock {
  position: absolute; left: 84px; top: 1492px; width: 2392px; height: 108px; padding-left: 6px; display: flex;
  border-radius: 10px 10px 0 0; box-shadow: 0 -1px 2px rgba(0,0,0,.35);
  background: linear-gradient(90deg, #778896 0, #6b7f92 120px, #667c8e 250px, #5e7477 420px, #5f6c6c 520px, #5a7079 600px, #5d5c5c 740px, #5e5b5a 900px, #62655c 1080px, #5a5d5d 1250px, #67645f 1400px, #777268 1560px, #88847a 1700px, #b4bcbe 1765px, #cfdde6 1850px, #d6e5ee 1960px, #dde1e8 2040px, #dddcdf 2150px, #e6e6e7 2392px);
}
.dock svg { width: 90px; height: 108px; padding: 51px 0 0 45px; }
.dim > circle:last-child { fill: #3a3f42; }
.grey > circle:last-child { fill: #5c5c5e; }
.sep { width: 2px; height: 80px; margin: 14px 18px 0 20px; background: #aaa; flex: none; }
.badge { font: 23px Inter, sans-serif; fill: #fff; text-anchor: middle; letter-spacing: -1px; }
.pg { font: 10px Inter, sans-serif; fill: #fff; }
.jul { font: 14px Inter, sans-serif; fill: #fff; text-anchor: middle; }
.day { font: 300 39px Inter, sans-serif; fill: #222; text-anchor: middle; }
.hand { font: italic 9px Lato, sans-serif; fill: #55523a; }
.big { font-size: 10px; }
.eggs { fill: #e2231a; font-weight: bold; }
.milk { fill: #1b3a7a; font-weight: bold; }
```
